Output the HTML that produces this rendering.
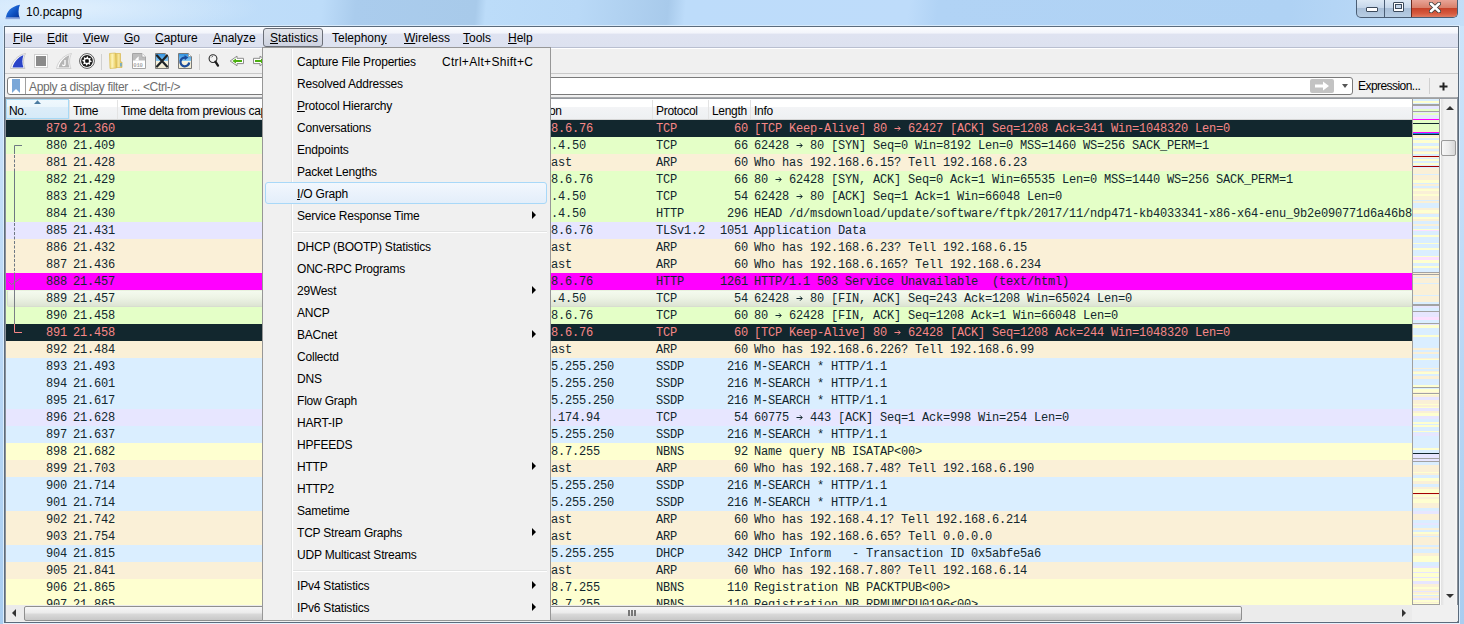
<!DOCTYPE html>
<html><head><meta charset="utf-8">
<style>
*{margin:0;padding:0;box-sizing:border-box}
html,body{width:1464px;height:624px;overflow:hidden}
body{position:relative;background:linear-gradient(#cde5fb 0%,#bcd9f6 50%,#a9cdf0 100%);font-family:"Liberation Sans",sans-serif;font-size:12px;color:#000}
.abs{position:absolute}
#title{left:26px;top:5px;font-size:12px;color:#000;}
#win{left:4px;top:26px;width:1455px;height:597px;border:1px solid #5b6b7c;background:#f0f0f0}
#menubar{left:5px;top:27px;width:1453px;height:21px;background:linear-gradient(#fbfcfe 0%,#f3f5fb 30%,#dfe3f1 36%,#dde2f0 100%);border-bottom:1px solid #b9bfd0}
.mb{position:absolute;top:4px;font-size:12px}
#toolbar{left:5px;top:48px;width:1453px;height:26px;background:#f0f0f0;border-top:1px solid #fff;border-bottom:1px solid #c9c9c9}
#filterbar{left:5px;top:74px;width:1453px;height:24px;background:#f0f0f0}
#fbox{left:7px;top:77px;width:1346px;height:18px;border:1px solid #7a7a7a;border-radius:3px;background:#fff}
#plist{left:5px;top:97px;width:1453px;height:525px;background:#f0f0f0}
#pframe{left:5px;top:97px;width:1453px;height:2px;background:linear-gradient(#b4b4b4,#8a9098)}
#pleft{left:5px;top:97px;width:1px;height:525px;background:#8a9098}
#hdr{left:6px;top:99px;width:1406px;height:21px;background:linear-gradient(#fff 0%,#fff 38%,#f3f4f6 38%,#eef0f2 100%);border-bottom:1px solid #d5d5d5}
.hc{position:absolute;top:5px;font-size:12px;letter-spacing:-0.3px}
.hs{position:absolute;top:1px;width:1px;height:19px;background:#e3e3e3}
#rows{left:6px;top:0;width:1406px;height:605px;overflow:hidden;clip-path:inset(120px 0 0 0)}
.r{position:absolute;left:0;width:1406px;height:17px;font-family:"Liberation Mono",monospace;font-size:12px;letter-spacing:-0.2px;color:#12272e;white-space:pre}
.r .c{position:absolute;top:2px}
.r .rt{text-align:right}
.ar{position:absolute;top:4px;z-index:1}
.bad{background:#12272e;color:#f78787}
.http{background:#e4ffc7}
.arp{background:#faf0d7}
.tcp{background:#e7e6ff}
.udp{background:#daeeff}
.smb{background:#feffd0}
.mag{background:#ff00ff}
.hover{background:#e4ffc7}
.hover:before{content:"";position:absolute;left:1px;top:0;right:-4px;bottom:0;border-radius:2px;background:linear-gradient(#f4faee 0%,#edf4e5 45%,#e3eada 80%,#dde4d3 100%);border:1px solid #d8ddd0;border-top-color:#e8f2de}
.r span{z-index:1}
#mini{left:1412px;top:98px;width:28px;height:507px;border:1px solid #a0a0a0;background:#daeeff;overflow:hidden}
#mini div{position:absolute;left:0;width:26px}
#vsb{left:1440px;top:99px;width:17px;height:506px;background:linear-gradient(90deg,#fafafa 0px,#fafafa 1px,#e2e2e2 1px,#e8e8e8 3px,#f0f0f0 4px,#f0f0f0 15px,#f6f6f6 16px)}
#pright{left:1457px;top:97px;width:1px;height:525px;background:#8a9098}
#hsb{left:6px;top:605px;width:1406px;height:16px;background:#ebebeb}
#corner{left:1412px;top:605px;width:46px;height:16px;background:#f0f0f0}
#menu{left:262px;top:47px;width:289px;height:574px;background:#f0f0f0;border:1px solid #979797}
#msepv{left:291px;top:49px;width:2px;height:569px;border-left:1px solid #e2e3e3;border-right:1px solid #fff}
.mi{position:absolute;left:265px;width:282px;height:22px}
.mi.hl{border:1px solid #a8d8f8;border-radius:3px;background:linear-gradient(#f2f7fd,#e3eefa)}
.ml{position:absolute;left:32px;top:5px;font-size:12px;letter-spacing:-0.2px}
.hl .ml{left:31px;top:4px}
.ms{position:absolute;left:177px;top:5px;font-size:12px;letter-spacing:0.3px}
.ma{position:absolute;left:267px;top:7px;width:0;height:0;border-top:4px solid transparent;border-bottom:4px solid transparent;border-left:4px solid #000}
.msep{position:absolute;left:293px;width:254px;height:2px;border-top:1px solid #e2e3e3;border-bottom:1px solid #fff}
u{text-decoration:underline}
</style></head><body>
<!-- title bar -->
<div class="abs" style="left:0;top:0;width:1464px;height:26px;background:radial-gradient(ellipse 200px 30px at 60px 8px,rgba(232,244,255,0.8),rgba(232,244,255,0) 100%),linear-gradient(95deg,#c4e0fa 0%,#bddcf9 22%,#aacced 24.3%,#a8caea 32.5%,#bcdcf9 33.2%,#b9d9f7 39.5%,#a8caeb 45.6%,#bddcfa 46.8%,#bedcfa 62%,#b1d3f5 64%,#afd2f4 88%,#c3def8 100%)"></div>
<svg class="abs" style="left:5px;top:4px" width="16" height="16" viewBox="0 0 16 16"><defs><linearGradient id="shk" x1="0" y1="0" x2="1" y2="1"><stop offset="0" stop-color="#3a8af0"/><stop offset="0.6" stop-color="#0d4fc0"/><stop offset="1" stop-color="#062f90"/></linearGradient></defs><path d="M0.8 14.5 C1.5 7.5 6 2.5 15 0.8 C13.2 4.5 13 10 14.8 14.5 Z" fill="url(#shk)"/><rect x="0.5" y="13.2" width="14.5" height="2" fill="#8ea6dc" opacity="0.9"/></svg>
<div id="title" class="abs">10.pcapng</div>
<div class="abs" style="left:1356px;top:0;width:102px;height:18px;border:1px solid #4a5d74;border-top:none;border-radius:0 0 5px 5px;overflow:hidden;background:linear-gradient(#dce8f4 0%,#c6d7ea 45%,#a9bfd8 50%,#b7cde3 100%)">
 <div class="abs" style="left:27px;top:0;width:1px;height:17px;background:#4a5d74"></div>
 <div class="abs" style="left:54px;top:0;width:47px;height:17px;background:linear-gradient(#e8a496 0%,#d9806b 45%,#c7432a 50%,#d65a3f 80%,#e07c62 100%);border-left:1px solid #6b2a1e"></div>
 <div class="abs" style="left:9px;top:7px;width:12px;height:5px;background:#fff;border:1px solid #3b4a5c;border-radius:1px"></div>
 <div class="abs" style="left:36px;top:2px;width:11px;height:10px;border:1px solid #3b4a5c;border-radius:1px;background:#fff"></div>
 <div class="abs" style="left:38px;top:4px;width:7px;height:5px;border:1px solid #3b4a5c;background:#c6d7ea"></div>
 <svg class="abs" style="left:72px;top:2px" width="12" height="11" viewBox="0 0 12 11"><path d="M2 1.8 L10 9.2 M10 1.8 L2 9.2" stroke="#3b3b3b" stroke-width="4.2" stroke-linecap="round"/><path d="M2 1.8 L10 9.2 M10 1.8 L2 9.2" stroke="#fff" stroke-width="2.6" stroke-linecap="round"/></svg>
</div>
<div class="abs" style="left:3px;top:25px;width:1457px;height:1px;background:#d8ebfc"></div><div class="abs" style="left:3px;top:25px;width:1px;height:599px;background:#dcedfc"></div><div class="abs" style="left:1459px;top:26px;width:1px;height:598px;background:#dcedfc"></div><div class="abs" style="left:3px;top:623px;width:1457px;height:1px;background:#e6f2fd"></div>
<div id="win" class="abs"></div>
<div id="menubar" class="abs">
 <span class="mb" style="left:8px"><u>F</u>ile</span>
 <span class="mb" style="left:42px"><u>E</u>dit</span>
 <span class="mb" style="left:78px"><u>V</u>iew</span>
 <span class="mb" style="left:119px"><u>G</u>o</span>
 <span class="mb" style="left:150px"><u>C</u>apture</span>
 <span class="mb" style="left:208px"><u>A</u>nalyze</span>
 <div class="abs" style="left:258px;top:1px;width:60px;height:19px;border:1px solid #6b6f78;border-radius:3px;background:linear-gradient(#e4e6ec,#cdd2e0)"></div>
 <span class="mb" style="left:265px"><u>S</u>tatistics</span>
 <span class="mb" style="left:327px">Telephon<u>y</u></span>
 <span class="mb" style="left:399px"><u>W</u>ireless</span>
 <span class="mb" style="left:458px"><u>T</u>ools</span>
 <span class="mb" style="left:503px"><u>H</u>elp</span>
</div>
<div id="toolbar" class="abs"></div>
<!-- toolbar icons -->
<svg width="0" height="0" style="position:absolute"><defs>
<linearGradient id="sky" x1="0" y1="0" x2="0" y2="1"><stop offset="0" stop-color="#2a8fe0"/><stop offset="0.5" stop-color="#8ccaf4"/><stop offset="0.52" stop-color="#f6f3e0"/><stop offset="1" stop-color="#efe9cf"/></linearGradient>
<linearGradient id="fold1" x1="0" y1="0" x2="1" y2="0"><stop offset="0" stop-color="#f0d870"/><stop offset="0.4" stop-color="#fdf3b8"/><stop offset="1" stop-color="#e6c550"/></linearGradient>
<linearGradient id="fold2" x1="0" y1="0" x2="1" y2="0"><stop offset="0" stop-color="#d9b948"/><stop offset="0.5" stop-color="#f6e49a"/><stop offset="1" stop-color="#e2c456"/></linearGradient>
</defs></svg>

<svg class="abs" style="left:10px;top:53px" width="16" height="16" viewBox="0 0 16 16"><path d="M0.5 15.5 C2 8 8 2 15.5 0.5 C13 5 13 11 15 15.5 Z" fill="#fff" stroke="#c8c8c8" stroke-width="1"/><path d="M2.5 14.5 C4 9 8 4 13.5 2 C12 6 12 11 13.5 14.5 Z" fill="#2a44c8"/></svg>
<div class="abs" style="left:34px;top:54px;width:14px;height:14px;border:1px solid #d0d0d0;background:#fff"></div>
<div class="abs" style="left:36px;top:56px;width:10px;height:10px;background:#8a8a8a"></div>
<svg class="abs" style="left:56px;top:53px" width="16" height="16" viewBox="0 0 16 16"><path d="M0.5 15.5 C2 8 8 2 15.5 0.5 C13 5 13 11 15 15.5 Z" fill="#fff" stroke="#d0d0d0" stroke-width="1"/><path d="M2.5 14.5 C4 9 8 4 13.5 2 C12 6 12 11 13.5 14.5 Z" fill="#b5b5b5"/><path d="M9 7 L9 11.5 C9 13 6.5 13 6.5 11.5" fill="none" stroke="#fff" stroke-width="1.3"/></svg>
<svg class="abs" style="left:79px;top:53px" width="16" height="16" viewBox="0 0 16 16"><circle cx="8" cy="8" r="7.4" fill="#fff" stroke="#5a5a5a" stroke-width="1"/><circle cx="8" cy="8" r="5.9" fill="#1a1a1a"/><path d="M8.00 3.40 L8.90 3.49 L9.26 4.95 L9.83 5.26 L11.25 4.75 L11.82 5.44 L11.05 6.74 L11.24 7.36 L12.60 8.00 L12.51 8.90 L11.05 9.26 L10.74 9.83 L11.25 11.25 L10.56 11.82 L9.26 11.05 L8.64 11.24 L8.00 12.60 L7.10 12.51 L6.74 11.05 L6.17 10.74 L4.75 11.25 L4.18 10.56 L4.95 9.26 L4.76 8.64 L3.40 8.00 L3.49 7.10 L4.95 6.74 L5.26 6.17 L4.75 4.75 L5.44 4.18 L6.74 4.95 L7.36 4.76 Z" fill="#fff"/><rect x="6.2" y="6.2" width="3.6" height="3.6" rx="0.8" fill="#111"/></svg>
<div class="abs" style="left:101px;top:54px;width:1px;height:16px;background:#d0d0d0"></div>
<svg class="abs" style="left:108px;top:52px" width="16" height="17" viewBox="0 0 16 17"><path d="M7 1.5 L12.5 1.5 L12.5 10 L14 10 L14 15.5 L8 15.5 Z" fill="url(#fold2)" stroke="#d8b850" stroke-width="0.7"/><path d="M1.5 1.5 L7.5 1 L8.5 16 L2 16.5 Z" fill="url(#fold1)" stroke="#d8bc58" stroke-width="0.7"/><rect x="12.3" y="11" width="1.3" height="3.5" fill="#4aa0e8"/></svg>
<svg class="abs" style="left:131px;top:53px" width="16" height="16" viewBox="0 0 16 16"><path d="M1.5 0.5 L11 0.5 L14.5 4 L14.5 15.5 L1.5 15.5 Z" fill="#fff" stroke="#a6a6a6"/><path d="M2 1 L10.8 1 L14 4.2 L14 7.5 L2 7.5 Z" fill="#bdbdbd"/><path d="M11 0.5 L11 4 L14.5 4" fill="#fff" stroke="#a6a6a6" stroke-width="0.8"/><path d="M4 7.5 C5 5.5 6.5 4 8 3.5 C7.5 5 7.5 6.5 8 7.5 Z" fill="#fff"/><text x="2.3" y="13.6" font-family="Liberation Mono" font-size="5.6" fill="#a8a8a8" font-weight="bold" letter-spacing="-0.2">010</text></svg>
<svg class="abs" style="left:154px;top:53px" width="16" height="16" viewBox="0 0 16 16"><path d="M1.5 0.5 L11.5 0.5 L14.5 3.5 L14.5 15.5 L1.5 15.5 Z" fill="url(#sky)" stroke="#7a7a78"/><path d="M11.5 0.5 L11.5 3.5 L14.5 3.5" fill="#fff" stroke="#9a9a98" stroke-width="0.8"/><path d="M3 2.5 L13 13.5 M13 2.5 L3 13.5" stroke="#1e2326" stroke-width="2.2" stroke-linecap="round"/></svg>
<svg class="abs" style="left:177px;top:53px" width="16" height="16" viewBox="0 0 16 16"><path d="M1.5 0.5 L11.5 0.5 L14.5 3.5 L14.5 15.5 L1.5 15.5 Z" fill="url(#sky)" stroke="#7a7a78"/><path d="M11.5 0.5 L11.5 3.5 L14.5 3.5" fill="#fff" stroke="#9a9a98" stroke-width="0.8"/><path d="M12.2 9.5 A4.4 4.4 0 1 1 8.5 4.6" fill="none" stroke="#1b4c9c" stroke-width="2.3"/><path d="M7.5 2 L11.3 4.6 L7.8 7.2 Z" fill="#1b4c9c"/></svg>
<div class="abs" style="left:199px;top:54px;width:1px;height:16px;background:#d0d0d0"></div>
<svg class="abs" style="left:207px;top:53px" width="16" height="16" viewBox="0 0 16 16"><circle cx="6" cy="5.6" r="3.9" fill="#f4f4f4" stroke="#2a2a2a" stroke-width="1.1"/><path d="M4.2 4.5 A2.2 2.2 0 0 1 6 3.3" fill="none" stroke="#555" stroke-width="0.8"/><path d="M8.4 8.6 L11 12.6" stroke="#1e1e1e" stroke-width="2.3" stroke-linecap="round"/></svg>
<svg class="abs" style="left:229px;top:53px" width="16" height="16" viewBox="0 0 16 16"><path d="M1.2 8 L8 3.1 L8 5.3 L14.5 5.3 L14.5 10.6 L8 10.6 L8 12.8 Z" fill="#fff" stroke="#8c8c8c" stroke-width="1" stroke-linejoin="round"/><path d="M3.3 8 L7 5.5 L7 7 L13 7 L13 9 L7 9 L7 10.5 Z" fill="#4caf10"/></svg>
<svg class="abs" style="left:252px;top:53px" width="16" height="16" viewBox="0 0 16 16"><path d="M14.8 8 L8 3.1 L8 5.3 L1.5 5.3 L1.5 10.6 L8 10.6 L8 12.8 Z" fill="#fff" stroke="#8c8c8c" stroke-width="1" stroke-linejoin="round"/><path d="M12.7 8 L9 5.5 L9 7 L3 7 L3 9 L9 9 L9 10.5 Z" fill="#4caf10"/></svg>
<div id="filterbar" class="abs"></div>
<div id="fbox" class="abs"></div>
<div class="abs" style="left:25px;top:78px;width:1px;height:16px;background:#a0a0a0"></div>
<svg class="abs" style="left:11px;top:79px" width="10" height="14" viewBox="0 0 10 14"><path d="M1 0 L9 0 L9 14 L5 10 L1 14 Z" fill="#7aa7d8"/></svg>
<div class="abs" style="left:29px;top:80px;color:#6d6d6d;font-size:12px;letter-spacing:-0.35px">Apply a display filter ... &lt;Ctrl-/&gt;</div>
<div class="abs" style="left:1310px;top:79px;width:24px;height:14px;background:#c3c3c3;border-radius:2px"></div>
<svg class="abs" style="left:1313px;top:80px" width="18" height="12" viewBox="0 0 18 12"><path d="M2 4.5 L10 4.5 L10 1.5 L16 6 L10 10.5 L10 7.5 L2 7.5 Z" fill="#fff"/></svg>
<div class="abs" style="left:1342px;top:84px;width:0;height:0;border-left:3.5px solid transparent;border-right:3.5px solid transparent;border-top:4px solid #555"></div>
<div class="abs" style="left:1358px;top:79px;font-size:12px;letter-spacing:-0.55px">Expression...</div>
<div class="abs" style="left:1429px;top:78px;width:1px;height:16px;background:#d0d0d0"></div>
<svg class="abs" style="left:1439px;top:82px" width="9" height="9" viewBox="0 0 9 9"><path d="M4.5 0.5 V8.5 M0.5 4.5 H8.5" stroke="#222" stroke-width="2"/></svg>
<!-- packet list -->
<div id="pframe" class="abs"></div><div id="pleft" class="abs"></div><div id="pright" class="abs"></div>
<div id="hdr" class="abs">
 <div class="abs" style="left:0;top:0;width:63px;height:20px;background:linear-gradient(#eff8fd 0%,#eaf5fc 38%,#dcedf9 38%,#d6eaf8 100%);border:1px solid #a7d9f5"></div>
 <svg class="abs" style="left:28px;top:1px" width="7" height="4" viewBox="0 0 7 4"><path d="M0 4 L3.5 0.3 L7 4 Z" fill="#4a7aa0"/></svg>
 <span class="hc" style="left:3px">No.</span>
 <div class="hs" style="left:63px"></div>
 <span class="hc" style="left:67px">Time</span>
 <div class="hs" style="left:111px"></div>
 <span class="hc" style="left:115px">Time delta from previous captured frame</span>
 <div class="hs" style="left:646px"></div>
 <span class="hc" style="left:499px">Destination</span>
 <span class="hc" style="left:650px">Protocol</span>
 <div class="hs" style="left:702px"></div>
 <span class="hc" style="left:706px">Length</span>
 <div class="hs" style="left:744px"></div>
 <span class="hc" style="left:748px">Info</span>
</div>
<div id="rows" class="abs">
<div class="r bad" style="top:120px"><span class="c" style="left:40px">879</span><span class="c" style="left:67px">21.360</span><span class="c" style="left:503px">192.168.6.76</span><span class="c" style="left:650px">TCP</span><span class="c rt" style="right:664px">60</span><span class="c" style="left:748px">[TCP Keep-Alive] 80   62427 [ACK] Seq=1208 Ack=341 Win=1048320 Len=0</span><svg class="ar" style="left:888px" width="7" height="9" viewBox="0 0 7 9"><path d="M0.5 4.5 H6 M4 2.3 L6.2 4.5 L4 6.7" fill="none" stroke="currentColor" stroke-width="1"/></svg></div>
<div class="r http" style="top:137px"><span class="c" style="left:40px">880</span><span class="c" style="left:67px">21.409</span><span class="c" style="left:503px">13.107.4.50</span><span class="c" style="left:650px">TCP</span><span class="c rt" style="right:664px">66</span><span class="c" style="left:748px">62428   80 [SYN] Seq=0 Win=8192 Len=0 MSS=1460 WS=256 SACK_PERM=1</span><svg class="ar" style="left:790px" width="7" height="9" viewBox="0 0 7 9"><path d="M0.5 4.5 H6 M4 2.3 L6.2 4.5 L4 6.7" fill="none" stroke="currentColor" stroke-width="1"/></svg></div>
<div class="r arp" style="top:154px"><span class="c" style="left:40px">881</span><span class="c" style="left:67px">21.428</span><span class="c" style="left:503px">Broadcast</span><span class="c" style="left:650px">ARP</span><span class="c rt" style="right:664px">60</span><span class="c" style="left:748px">Who has 192.168.6.15? Tell 192.168.6.23</span></div>
<div class="r http" style="top:171px"><span class="c" style="left:40px">882</span><span class="c" style="left:67px">21.429</span><span class="c" style="left:503px">192.168.6.76</span><span class="c" style="left:650px">TCP</span><span class="c rt" style="right:664px">66</span><span class="c" style="left:748px">80   62428 [SYN, ACK] Seq=0 Ack=1 Win=65535 Len=0 MSS=1440 WS=256 SACK_PERM=1</span><svg class="ar" style="left:769px" width="7" height="9" viewBox="0 0 7 9"><path d="M0.5 4.5 H6 M4 2.3 L6.2 4.5 L4 6.7" fill="none" stroke="currentColor" stroke-width="1"/></svg></div>
<div class="r http" style="top:188px"><span class="c" style="left:40px">883</span><span class="c" style="left:67px">21.429</span><span class="c" style="left:503px">13.107.4.50</span><span class="c" style="left:650px">TCP</span><span class="c rt" style="right:664px">54</span><span class="c" style="left:748px">62428   80 [ACK] Seq=1 Ack=1 Win=66048 Len=0</span><svg class="ar" style="left:790px" width="7" height="9" viewBox="0 0 7 9"><path d="M0.5 4.5 H6 M4 2.3 L6.2 4.5 L4 6.7" fill="none" stroke="currentColor" stroke-width="1"/></svg></div>
<div class="r http" style="top:205px"><span class="c" style="left:40px">884</span><span class="c" style="left:67px">21.430</span><span class="c" style="left:503px">13.107.4.50</span><span class="c" style="left:650px">HTTP</span><span class="c rt" style="right:664px">296</span><span class="c" style="left:748px">HEAD /d/msdownload/update/software/ftpk/2017/11/ndp471-kb4033341-x86-x64-enu_9b2e090771d6a46b80b5</span></div>
<div class="r tcp" style="top:222px"><span class="c" style="left:40px">885</span><span class="c" style="left:67px">21.431</span><span class="c" style="left:503px">192.168.6.76</span><span class="c" style="left:650px">TLSv1.2</span><span class="c rt" style="right:664px">1051</span><span class="c" style="left:748px">Application Data</span></div>
<div class="r arp" style="top:239px"><span class="c" style="left:40px">886</span><span class="c" style="left:67px">21.432</span><span class="c" style="left:503px">Broadcast</span><span class="c" style="left:650px">ARP</span><span class="c rt" style="right:664px">60</span><span class="c" style="left:748px">Who has 192.168.6.23? Tell 192.168.6.15</span></div>
<div class="r arp" style="top:256px"><span class="c" style="left:40px">887</span><span class="c" style="left:67px">21.436</span><span class="c" style="left:503px">Broadcast</span><span class="c" style="left:650px">ARP</span><span class="c rt" style="right:664px">60</span><span class="c" style="left:748px">Who has 192.168.6.165? Tell 192.168.6.234</span></div>
<div class="r mag" style="top:273px"><span class="c" style="left:40px">888</span><span class="c" style="left:67px">21.457</span><span class="c" style="left:503px">192.168.6.76</span><span class="c" style="left:650px">HTTP</span><span class="c rt" style="right:664px">1261</span><span class="c" style="left:748px">HTTP/1.1 503 Service Unavailable  (text/html)</span></div>
<div class="r hover" style="top:290px"><span class="c" style="left:40px">889</span><span class="c" style="left:67px">21.457</span><span class="c" style="left:503px">13.107.4.50</span><span class="c" style="left:650px">TCP</span><span class="c rt" style="right:664px">54</span><span class="c" style="left:748px">62428   80 [FIN, ACK] Seq=243 Ack=1208 Win=65024 Len=0</span><svg class="ar" style="left:790px" width="7" height="9" viewBox="0 0 7 9"><path d="M0.5 4.5 H6 M4 2.3 L6.2 4.5 L4 6.7" fill="none" stroke="currentColor" stroke-width="1"/></svg></div>
<div class="r http" style="top:307px"><span class="c" style="left:40px">890</span><span class="c" style="left:67px">21.458</span><span class="c" style="left:503px">192.168.6.76</span><span class="c" style="left:650px">TCP</span><span class="c rt" style="right:664px">60</span><span class="c" style="left:748px">80   62428 [FIN, ACK] Seq=1208 Ack=1 Win=66048 Len=0</span><svg class="ar" style="left:769px" width="7" height="9" viewBox="0 0 7 9"><path d="M0.5 4.5 H6 M4 2.3 L6.2 4.5 L4 6.7" fill="none" stroke="currentColor" stroke-width="1"/></svg></div>
<div class="r bad" style="top:324px"><span class="c" style="left:40px">891</span><span class="c" style="left:67px">21.458</span><span class="c" style="left:503px">192.168.6.76</span><span class="c" style="left:650px">TCP</span><span class="c rt" style="right:664px">60</span><span class="c" style="left:748px">[TCP Keep-Alive] 80   62428 [ACK] Seq=1208 Ack=244 Win=1048320 Len=0</span><svg class="ar" style="left:888px" width="7" height="9" viewBox="0 0 7 9"><path d="M0.5 4.5 H6 M4 2.3 L6.2 4.5 L4 6.7" fill="none" stroke="currentColor" stroke-width="1"/></svg></div>
<div class="r arp" style="top:341px"><span class="c" style="left:40px">892</span><span class="c" style="left:67px">21.484</span><span class="c" style="left:503px">Broadcast</span><span class="c" style="left:650px">ARP</span><span class="c rt" style="right:664px">60</span><span class="c" style="left:748px">Who has 192.168.6.226? Tell 192.168.6.99</span></div>
<div class="r udp" style="top:358px"><span class="c" style="left:40px">893</span><span class="c" style="left:67px">21.493</span><span class="c" style="left:503px">239.255.255.250</span><span class="c" style="left:650px">SSDP</span><span class="c rt" style="right:664px">216</span><span class="c" style="left:748px">M-SEARCH * HTTP/1.1</span></div>
<div class="r udp" style="top:375px"><span class="c" style="left:40px">894</span><span class="c" style="left:67px">21.601</span><span class="c" style="left:503px">239.255.255.250</span><span class="c" style="left:650px">SSDP</span><span class="c rt" style="right:664px">216</span><span class="c" style="left:748px">M-SEARCH * HTTP/1.1</span></div>
<div class="r udp" style="top:392px"><span class="c" style="left:40px">895</span><span class="c" style="left:67px">21.617</span><span class="c" style="left:503px">239.255.255.250</span><span class="c" style="left:650px">SSDP</span><span class="c rt" style="right:664px">216</span><span class="c" style="left:748px">M-SEARCH * HTTP/1.1</span></div>
<div class="r tcp" style="top:409px"><span class="c" style="left:40px">896</span><span class="c" style="left:67px">21.628</span><span class="c" style="left:503px">52.114.174.94</span><span class="c" style="left:650px">TCP</span><span class="c rt" style="right:664px">54</span><span class="c" style="left:748px">60775   443 [ACK] Seq=1 Ack=998 Win=254 Len=0</span><svg class="ar" style="left:790px" width="7" height="9" viewBox="0 0 7 9"><path d="M0.5 4.5 H6 M4 2.3 L6.2 4.5 L4 6.7" fill="none" stroke="currentColor" stroke-width="1"/></svg></div>
<div class="r udp" style="top:426px"><span class="c" style="left:40px">897</span><span class="c" style="left:67px">21.637</span><span class="c" style="left:503px">239.255.255.250</span><span class="c" style="left:650px">SSDP</span><span class="c rt" style="right:664px">216</span><span class="c" style="left:748px">M-SEARCH * HTTP/1.1</span></div>
<div class="r smb" style="top:443px"><span class="c" style="left:40px">898</span><span class="c" style="left:67px">21.682</span><span class="c" style="left:503px">192.168.7.255</span><span class="c" style="left:650px">NBNS</span><span class="c rt" style="right:664px">92</span><span class="c" style="left:748px">Name query NB ISATAP&lt;00&gt;</span></div>
<div class="r arp" style="top:460px"><span class="c" style="left:40px">899</span><span class="c" style="left:67px">21.703</span><span class="c" style="left:503px">Broadcast</span><span class="c" style="left:650px">ARP</span><span class="c rt" style="right:664px">60</span><span class="c" style="left:748px">Who has 192.168.7.48? Tell 192.168.6.190</span></div>
<div class="r udp" style="top:477px"><span class="c" style="left:40px">900</span><span class="c" style="left:67px">21.714</span><span class="c" style="left:503px">239.255.255.250</span><span class="c" style="left:650px">SSDP</span><span class="c rt" style="right:664px">216</span><span class="c" style="left:748px">M-SEARCH * HTTP/1.1</span></div>
<div class="r udp" style="top:494px"><span class="c" style="left:40px">901</span><span class="c" style="left:67px">21.714</span><span class="c" style="left:503px">239.255.255.250</span><span class="c" style="left:650px">SSDP</span><span class="c rt" style="right:664px">216</span><span class="c" style="left:748px">M-SEARCH * HTTP/1.1</span></div>
<div class="r arp" style="top:511px"><span class="c" style="left:40px">902</span><span class="c" style="left:67px">21.742</span><span class="c" style="left:503px">Broadcast</span><span class="c" style="left:650px">ARP</span><span class="c rt" style="right:664px">60</span><span class="c" style="left:748px">Who has 192.168.4.1? Tell 192.168.6.214</span></div>
<div class="r arp" style="top:528px"><span class="c" style="left:40px">903</span><span class="c" style="left:67px">21.754</span><span class="c" style="left:503px">Broadcast</span><span class="c" style="left:650px">ARP</span><span class="c rt" style="right:664px">60</span><span class="c" style="left:748px">Who has 192.168.6.65? Tell 0.0.0.0</span></div>
<div class="r udp" style="top:545px"><span class="c" style="left:40px">904</span><span class="c" style="left:67px">21.815</span><span class="c" style="left:503px">255.255.255.255</span><span class="c" style="left:650px">DHCP</span><span class="c rt" style="right:664px">342</span><span class="c" style="left:748px">DHCP Inform   - Transaction ID 0x5abfe5a6</span></div>
<div class="r arp" style="top:562px"><span class="c" style="left:40px">905</span><span class="c" style="left:67px">21.841</span><span class="c" style="left:503px">Broadcast</span><span class="c" style="left:650px">ARP</span><span class="c rt" style="right:664px">60</span><span class="c" style="left:748px">Who has 192.168.7.80? Tell 192.168.6.14</span></div>
<div class="r smb" style="top:579px"><span class="c" style="left:40px">906</span><span class="c" style="left:67px">21.865</span><span class="c" style="left:503px">192.168.7.255</span><span class="c" style="left:650px">NBNS</span><span class="c rt" style="right:664px">110</span><span class="c" style="left:748px">Registration NB PACKTPUB&lt;00&gt;</span></div>
<div class="r smb" style="top:596px"><span class="c" style="left:40px">907</span><span class="c" style="left:67px">21.865</span><span class="c" style="left:503px">192.168.7.255</span><span class="c" style="left:650px">NBNS</span><span class="c rt" style="right:664px">110</span><span class="c" style="left:748px">Registration NB RPMUMCPU0196&lt;00&gt;</span></div>
</div>
<!-- tree line -->
<svg class="abs" style="left:0;top:0" width="30" height="345" viewBox="0 0 30 345">
<path d="M22 145.5 H14.5 V154" fill="none" stroke="#6e7883" stroke-width="1"/>
<path d="M14.5 154 V171" fill="none" stroke="#6e7883" stroke-width="1" stroke-dasharray="3 1.5" stroke-dashoffset="-1"/>
<path d="M14.5 171 V222" fill="none" stroke="#6e7883" stroke-width="1"/>
<path d="M14.5 222 V273" fill="none" stroke="#6e7883" stroke-width="1" stroke-dasharray="3 1.5" stroke-dashoffset="-1"/>
<path d="M14.5 273 V324" fill="none" stroke="#7a7f86" stroke-width="1"/>
<path d="M14.5 324 V332.5 H22" fill="none" stroke="#f78787" stroke-width="1"/>
<path d="M8.5 281.5 L11.5 284.5 L20.5 278.5" fill="none" stroke="#8a7a8a" stroke-width="1"/>
</svg>
<div id="mini" class="abs"><div style="top:0px;height:2px;background:#daeeff"></div><div style="top:2px;height:2px;background:#feffd0"></div><div style="top:4px;height:2px;background:#daeeff"></div><div style="top:6px;height:1px;background:#e4ffc7"></div><div style="top:7px;height:3px;background:#e7e6ff"></div><div style="top:10px;height:3px;background:#e4ffc7"></div><div style="top:13px;height:1px;background:#e7e6ff"></div><div style="top:14px;height:2px;background:#e4ffc7"></div><div style="top:16px;height:1px;background:#e7e6ff"></div><div style="top:17px;height:3px;background:#e7e6ff"></div><div style="top:20px;height:2px;background:#e4ffc7"></div><div style="top:22px;height:3px;background:#e4ffc7"></div><div style="top:25px;height:3px;background:#e4ffc7"></div><div style="top:28px;height:1px;background:#e4ffc7"></div><div style="top:29px;height:1px;background:#e4ffc7"></div><div style="top:30px;height:3px;background:#e4ffc7"></div><div style="top:33px;height:2px;background:#e4ffc7"></div><div style="top:35px;height:2px;background:#faf0d7"></div><div style="top:37px;height:1px;background:#faf0d7"></div><div style="top:38px;height:1px;background:#feffd0"></div><div style="top:39px;height:2px;background:#daeeff"></div><div style="top:41px;height:1px;background:#feffd0"></div><div style="top:42px;height:2px;background:#feffd0"></div><div style="top:44px;height:3px;background:#daeeff"></div><div style="top:47px;height:2px;background:#feffd0"></div><div style="top:49px;height:1px;background:#faf0d7"></div><div style="top:50px;height:2px;background:#daeeff"></div><div style="top:52px;height:1px;background:#faf0d7"></div><div style="top:53px;height:1px;background:#feffd0"></div><div style="top:54px;height:1px;background:#feffd0"></div><div style="top:55px;height:2px;background:#daeeff"></div><div style="top:57px;height:1px;background:#daeeff"></div><div style="top:58px;height:1px;background:#faf0d7"></div><div style="top:59px;height:1px;background:#daeeff"></div><div style="top:60px;height:2px;background:#feffd0"></div><div style="top:62px;height:2px;background:#daeeff"></div><div style="top:64px;height:1px;background:#feffd0"></div><div style="top:65px;height:1px;background:#feffd0"></div><div style="top:66px;height:2px;background:#daeeff"></div><div style="top:68px;height:1px;background:#daeeff"></div><div style="top:69px;height:2px;background:#faf0d7"></div><div style="top:71px;height:2px;background:#faf0d7"></div><div style="top:73px;height:1px;background:#faf0d7"></div><div style="top:74px;height:1px;background:#faf0d7"></div><div style="top:75px;height:1px;background:#daeeff"></div><div style="top:76px;height:2px;background:#faf0d7"></div><div style="top:78px;height:3px;background:#faf0d7"></div><div style="top:81px;height:2px;background:#feffd0"></div><div style="top:83px;height:1px;background:#feffd0"></div><div style="top:84px;height:1px;background:#daeeff"></div><div style="top:85px;height:2px;background:#faf0d7"></div><div style="top:87px;height:2px;background:#daeeff"></div><div style="top:89px;height:1px;background:#faf0d7"></div><div style="top:90px;height:2px;background:#feffd0"></div><div style="top:92px;height:2px;background:#faf0d7"></div><div style="top:94px;height:1px;background:#faf0d7"></div><div style="top:95px;height:2px;background:#feffd0"></div><div style="top:97px;height:3px;background:#faf0d7"></div><div style="top:100px;height:1px;background:#faf0d7"></div><div style="top:101px;height:1px;background:#daeeff"></div><div style="top:102px;height:2px;background:#faf0d7"></div><div style="top:104px;height:3px;background:#daeeff"></div><div style="top:107px;height:2px;background:#daeeff"></div><div style="top:109px;height:1px;background:#faf0d7"></div><div style="top:110px;height:1px;background:#faf0d7"></div><div style="top:111px;height:3px;background:#feffd0"></div><div style="top:114px;height:1px;background:#faf0d7"></div><div style="top:115px;height:3px;background:#daeeff"></div><div style="top:118px;height:2px;background:#feffd0"></div><div style="top:120px;height:2px;background:#faf0d7"></div><div style="top:122px;height:3px;background:#daeeff"></div><div style="top:125px;height:2px;background:#faf0d7"></div><div style="top:127px;height:2px;background:#daeeff"></div><div style="top:129px;height:1px;background:#daeeff"></div><div style="top:130px;height:1px;background:#feffd0"></div><div style="top:131px;height:1px;background:#fce0ff"></div><div style="top:132px;height:1px;background:#daeeff"></div><div style="top:133px;height:3px;background:#daeeff"></div><div style="top:136px;height:2px;background:#feffd0"></div><div style="top:138px;height:3px;background:#daeeff"></div><div style="top:141px;height:2px;background:#daeeff"></div><div style="top:143px;height:1px;background:#daeeff"></div><div style="top:144px;height:1px;background:#feffd0"></div><div style="top:145px;height:2px;background:#daeeff"></div><div style="top:147px;height:2px;background:#daeeff"></div><div style="top:149px;height:2px;background:#feffd0"></div><div style="top:151px;height:2px;background:#daeeff"></div><div style="top:153px;height:3px;background:#daeeff"></div><div style="top:156px;height:1px;background:#daeeff"></div><div style="top:157px;height:1px;background:#feffd0"></div><div style="top:158px;height:3px;background:#fce0ff"></div><div style="top:161px;height:3px;background:#feffd0"></div><div style="top:164px;height:1px;background:#daeeff"></div><div style="top:165px;height:1px;background:#daeeff"></div><div style="top:166px;height:1px;background:#daeeff"></div><div style="top:167px;height:2px;background:#feffd0"></div><div style="top:169px;height:2px;background:#daeeff"></div><div style="top:171px;height:1px;background:#daeeff"></div><div style="top:172px;height:1px;background:#daeeff"></div><div style="top:173px;height:1px;background:#feffd0"></div><div style="top:174px;height:3px;background:#faf0d7"></div><div style="top:177px;height:1px;background:#faf0d7"></div><div style="top:178px;height:1px;background:#daeeff"></div><div style="top:179px;height:2px;background:#faf0d7"></div><div style="top:181px;height:3px;background:#faf0d7"></div><div style="top:184px;height:1px;background:#daeeff"></div><div style="top:185px;height:2px;background:#faf0d7"></div><div style="top:187px;height:1px;background:#faf0d7"></div><div style="top:188px;height:3px;background:#faf0d7"></div><div style="top:191px;height:2px;background:#faf0d7"></div><div style="top:193px;height:2px;background:#faf0d7"></div><div style="top:195px;height:1px;background:#faf0d7"></div><div style="top:196px;height:1px;background:#daeeff"></div><div style="top:197px;height:3px;background:#faf0d7"></div><div style="top:200px;height:1px;background:#faf0d7"></div><div style="top:201px;height:2px;background:#faf0d7"></div><div style="top:203px;height:1px;background:#daeeff"></div><div style="top:204px;height:1px;background:#daeeff"></div><div style="top:205px;height:1px;background:#daeeff"></div><div style="top:206px;height:3px;background:#e7e6ff"></div><div style="top:209px;height:3px;background:#daeeff"></div><div style="top:212px;height:2px;background:#e7e6ff"></div><div style="top:214px;height:3px;background:#e7e6ff"></div><div style="top:217px;height:1px;background:#e7e6ff"></div><div style="top:218px;height:1px;background:#fce0ff"></div><div style="top:219px;height:2px;background:#fce0ff"></div><div style="top:221px;height:2px;background:#daeeff"></div><div style="top:223px;height:2px;background:#daeeff"></div><div style="top:225px;height:1px;background:#e7e6ff"></div><div style="top:226px;height:3px;background:#feffd0"></div><div style="top:229px;height:1px;background:#daeeff"></div><div style="top:230px;height:3px;background:#daeeff"></div><div style="top:233px;height:2px;background:#daeeff"></div><div style="top:235px;height:1px;background:#daeeff"></div><div style="top:236px;height:2px;background:#feffd0"></div><div style="top:238px;height:2px;background:#daeeff"></div><div style="top:240px;height:1px;background:#daeeff"></div><div style="top:241px;height:2px;background:#daeeff"></div><div style="top:243px;height:3px;background:#daeeff"></div><div style="top:246px;height:3px;background:#daeeff"></div><div style="top:249px;height:2px;background:#faf0d7"></div><div style="top:251px;height:2px;background:#daeeff"></div><div style="top:253px;height:2px;background:#faf0d7"></div><div style="top:255px;height:2px;background:#daeeff"></div><div style="top:257px;height:2px;background:#daeeff"></div><div style="top:259px;height:1px;background:#faf0d7"></div><div style="top:260px;height:1px;background:#feffd0"></div><div style="top:261px;height:2px;background:#daeeff"></div><div style="top:263px;height:1px;background:#daeeff"></div><div style="top:264px;height:2px;background:#daeeff"></div><div style="top:266px;height:1px;background:#daeeff"></div><div style="top:267px;height:2px;background:#daeeff"></div><div style="top:269px;height:1px;background:#faf0d7"></div><div style="top:270px;height:2px;background:#daeeff"></div><div style="top:272px;height:1px;background:#faf0d7"></div><div style="top:273px;height:2px;background:#feffd0"></div><div style="top:275px;height:2px;background:#daeeff"></div><div style="top:277px;height:3px;background:#faf0d7"></div><div style="top:280px;height:2px;background:#daeeff"></div><div style="top:282px;height:1px;background:#daeeff"></div><div style="top:283px;height:3px;background:#daeeff"></div><div style="top:286px;height:2px;background:#feffd0"></div><div style="top:288px;height:2px;background:#daeeff"></div><div style="top:290px;height:3px;background:#feffd0"></div><div style="top:293px;height:1px;background:#faf0d7"></div><div style="top:294px;height:2px;background:#feffd0"></div><div style="top:296px;height:1px;background:#faf0d7"></div><div style="top:297px;height:1px;background:#faf0d7"></div><div style="top:298px;height:1px;background:#e7e6ff"></div><div style="top:299px;height:2px;background:#e7e6ff"></div><div style="top:301px;height:3px;background:#faf0d7"></div><div style="top:304px;height:1px;background:#faf0d7"></div><div style="top:305px;height:1px;background:#feffd0"></div><div style="top:306px;height:2px;background:#faf0d7"></div><div style="top:308px;height:1px;background:#feffd0"></div><div style="top:309px;height:3px;background:#e7e6ff"></div><div style="top:312px;height:1px;background:#faf0d7"></div><div style="top:313px;height:1px;background:#faf0d7"></div><div style="top:314px;height:3px;background:#feffd0"></div><div style="top:317px;height:3px;background:#e7e6ff"></div><div style="top:320px;height:3px;background:#daeeff"></div><div style="top:323px;height:2px;background:#feffd0"></div><div style="top:325px;height:1px;background:#daeeff"></div><div style="top:326px;height:2px;background:#feffd0"></div><div style="top:328px;height:2px;background:#daeeff"></div><div style="top:330px;height:2px;background:#daeeff"></div><div style="top:332px;height:1px;background:#feffd0"></div><div style="top:333px;height:1px;background:#daeeff"></div><div style="top:334px;height:3px;background:#e7e6ff"></div><div style="top:337px;height:3px;background:#daeeff"></div><div style="top:340px;height:2px;background:#daeeff"></div><div style="top:342px;height:1px;background:#daeeff"></div><div style="top:343px;height:1px;background:#daeeff"></div><div style="top:344px;height:1px;background:#daeeff"></div><div style="top:345px;height:1px;background:#daeeff"></div><div style="top:346px;height:3px;background:#daeeff"></div><div style="top:349px;height:2px;background:#feffd0"></div><div style="top:351px;height:1px;background:#daeeff"></div><div style="top:352px;height:3px;background:#daeeff"></div><div style="top:355px;height:1px;background:#e7e6ff"></div><div style="top:356px;height:2px;background:#e7e6ff"></div><div style="top:358px;height:2px;background:#e7e6ff"></div><div style="top:360px;height:1px;background:#e7e6ff"></div><div style="top:361px;height:1px;background:#e7e6ff"></div><div style="top:362px;height:1px;background:#e7e6ff"></div><div style="top:363px;height:3px;background:#daeeff"></div><div style="top:366px;height:1px;background:#faf0d7"></div><div style="top:367px;height:1px;background:#faf0d7"></div><div style="top:368px;height:3px;background:#faf0d7"></div><div style="top:371px;height:2px;background:#faf0d7"></div><div style="top:373px;height:1px;background:#feffd0"></div><div style="top:374px;height:2px;background:#faf0d7"></div><div style="top:376px;height:3px;background:#daeeff"></div><div style="top:379px;height:3px;background:#feffd0"></div><div style="top:382px;height:3px;background:#faf0d7"></div><div style="top:385px;height:3px;background:#daeeff"></div><div style="top:388px;height:2px;background:#faf0d7"></div><div style="top:390px;height:3px;background:#feffd0"></div><div style="top:393px;height:2px;background:#feffd0"></div><div style="top:395px;height:1px;background:#faf0d7"></div><div style="top:396px;height:2px;background:#feffd0"></div><div style="top:398px;height:2px;background:#faf0d7"></div><div style="top:400px;height:2px;background:#feffd0"></div><div style="top:402px;height:1px;background:#feffd0"></div><div style="top:403px;height:1px;background:#feffd0"></div><div style="top:404px;height:2px;background:#faf0d7"></div><div style="top:406px;height:3px;background:#faf0d7"></div><div style="top:409px;height:3px;background:#daeeff"></div><div style="top:412px;height:3px;background:#e7e6ff"></div><div style="top:415px;height:3px;background:#faf0d7"></div><div style="top:418px;height:2px;background:#faf0d7"></div><div style="top:420px;height:1px;background:#faf0d7"></div><div style="top:421px;height:3px;background:#daeeff"></div><div style="top:424px;height:2px;background:#e7e6ff"></div><div style="top:426px;height:2px;background:#daeeff"></div><div style="top:428px;height:1px;background:#daeeff"></div><div style="top:429px;height:2px;background:#faf0d7"></div><div style="top:431px;height:2px;background:#daeeff"></div><div style="top:433px;height:2px;background:#feffd0"></div><div style="top:435px;height:2px;background:#faf0d7"></div><div style="top:437px;height:1px;background:#daeeff"></div><div style="top:438px;height:3px;background:#faf0d7"></div><div style="top:441px;height:2px;background:#faf0d7"></div><div style="top:443px;height:1px;background:#faf0d7"></div><div style="top:444px;height:1px;background:#faf0d7"></div><div style="top:445px;height:1px;background:#faf0d7"></div><div style="top:446px;height:2px;background:#daeeff"></div><div style="top:448px;height:2px;background:#faf0d7"></div><div style="top:450px;height:3px;background:#daeeff"></div><div style="top:453px;height:1px;background:#daeeff"></div><div style="top:454px;height:3px;background:#faf0d7"></div><div style="top:457px;height:3px;background:#feffd0"></div><div style="top:460px;height:2px;background:#feffd0"></div><div style="top:462px;height:1px;background:#feffd0"></div><div style="top:463px;height:3px;background:#daeeff"></div><div style="top:466px;height:1px;background:#daeeff"></div><div style="top:467px;height:2px;background:#e7e6ff"></div><div style="top:469px;height:3px;background:#feffd0"></div><div style="top:472px;height:1px;background:#feffd0"></div><div style="top:473px;height:1px;background:#e7e6ff"></div><div style="top:474px;height:3px;background:#feffd0"></div><div style="top:477px;height:1px;background:#feffd0"></div><div style="top:478px;height:1px;background:#e7e6ff"></div><div style="top:479px;height:3px;background:#feffd0"></div><div style="top:482px;height:3px;background:#e7e6ff"></div><div style="top:485px;height:1px;background:#faf0d7"></div><div style="top:486px;height:2px;background:#faf0d7"></div><div style="top:488px;height:2px;background:#feffd0"></div><div style="top:490px;height:2px;background:#faf0d7"></div><div style="top:492px;height:1px;background:#e7e6ff"></div><div style="top:493px;height:1px;background:#faf0d7"></div><div style="top:494px;height:1px;background:#faf0d7"></div><div style="top:495px;height:1px;background:#feffd0"></div><div style="top:496px;height:1px;background:#daeeff"></div><div style="top:497px;height:2px;background:#faf0d7"></div><div style="top:499px;height:2px;background:#e7e6ff"></div><div style="top:501px;height:2px;background:#feffd0"></div><div style="top:503px;height:1px;background:#faf0d7"></div><div style="top:504px;height:2px;background:#feffd0"></div><div style="top:506px;height:1px;background:#faf0d7"></div><div style="top:5px;height:2px;background:#a2a2a2"></div><div style="top:12px;height:1px;background:#a2a2a2"></div><div style="top:20px;height:1px;background:#ff00ff"></div><div style="top:24px;height:1px;background:#12272e"></div><div style="top:33px;height:1px;background:#ff00ff"></div><div style="top:34px;height:1px;background:#1c86ee"></div><div style="top:35px;height:1px;background:#12272e"></div><div style="top:57px;height:1px;background:#a40000"></div><div style="top:67px;height:1px;background:#a40000"></div><div style="top:173px;height:1px;background:#a2a2a2"></div><div style="top:175px;height:1px;background:#a2a2a2"></div><div style="top:205px;height:1px;background:#a2a2a2"></div><div style="top:206px;height:1px;background:#a2a2a2"></div><div style="top:212px;height:1px;background:#a2a2a2"></div><div style="top:224px;height:1px;background:#a2a2a2"></div><div style="top:288px;height:1px;background:#a2a2a2"></div><div style="top:294px;height:1px;background:#a2a2a2"></div><div style="top:354px;height:1px;background:#12272e"></div><div style="top:359px;height:1px;background:#a2a2a2"></div><div style="top:362px;height:1px;background:#a2a2a2"></div><div style="top:394px;height:1px;background:#a40000"></div></div>
<div id="vsb" class="abs">
 <div class="abs" style="left:6px;top:7px;width:0;height:0;border-left:4px solid transparent;border-right:4px solid transparent;border-bottom:4px solid #333"></div>
 <div class="abs" style="left:1px;top:41px;width:15px;height:16px;border:1px solid #9a9a9a;border-radius:2px;background:linear-gradient(90deg,#f7f7f7,#ececec 50%,#d6d6d6)"></div>
 <div class="abs" style="left:6px;top:495px;width:0;height:0;border-left:4px solid transparent;border-right:4px solid transparent;border-top:4px solid #333"></div>
</div>
<div id="hsb" class="abs">
 <div class="abs" style="left:6px;top:4px;width:0;height:0;border-top:4px solid transparent;border-bottom:4px solid transparent;border-right:4px solid #333"></div>
 <div class="abs" style="left:18px;top:1px;width:1218px;height:15px;border:1px solid #8f8f8f;border-radius:2px;background:linear-gradient(#f7f7f7 0%,#ebebeb 45%,#d9d9d9 55%,#c8c8c8 100%)"></div>
 <div class="abs" style="left:622px;top:5px;width:8px;height:6px;border-left:2px solid #777;border-right:2px solid #777"></div>
 <div class="abs" style="left:625px;top:5px;width:2px;height:6px;background:#777"></div>
 <div class="abs" style="left:1396px;top:4px;width:0;height:0;border-top:4px solid transparent;border-bottom:4px solid transparent;border-left:4px solid #333"></div>
</div>
<div id="corner" class="abs"></div>
<!-- menu -->
<div id="menu" class="abs"></div>
<div id="msepv" class="abs"></div>
<div class="mi" style="top:50px"><span class="ml">Capture File Properties</span><span class="ms">Ctrl+Alt+Shift+C</span></div>
<div class="mi" style="top:72px"><span class="ml">Resolved Addresses</span></div>
<div class="mi" style="top:94px"><span class="ml"><u>P</u>rotocol Hierarchy</span></div>
<div class="mi" style="top:116px"><span class="ml">Conversations</span></div>
<div class="mi" style="top:138px"><span class="ml">Endpoints</span></div>
<div class="mi" style="top:160px"><span class="ml">Packet Lengths</span></div>
<div class="mi hl" style="top:182px"><span class="ml"><u>I</u>/O Graph</span></div>
<div class="mi" style="top:204px"><span class="ml">Service Response Time</span><span class="ma"></span></div>
<div class="msep" style="top:231px"></div>
<div class="mi" style="top:235px"><span class="ml">DHCP (BOOTP) Statistics</span></div>
<div class="mi" style="top:257px"><span class="ml">ONC-RPC Programs</span></div>
<div class="mi" style="top:279px"><span class="ml">29West</span><span class="ma"></span></div>
<div class="mi" style="top:301px"><span class="ml">ANCP</span></div>
<div class="mi" style="top:323px"><span class="ml">BACnet</span><span class="ma"></span></div>
<div class="mi" style="top:345px"><span class="ml">Collectd</span></div>
<div class="mi" style="top:367px"><span class="ml">DNS</span></div>
<div class="mi" style="top:389px"><span class="ml">Flow Graph</span></div>
<div class="mi" style="top:411px"><span class="ml">HART-IP</span></div>
<div class="mi" style="top:433px"><span class="ml">HPFEEDS</span></div>
<div class="mi" style="top:455px"><span class="ml">HTTP</span><span class="ma"></span></div>
<div class="mi" style="top:477px"><span class="ml">HTTP2</span></div>
<div class="mi" style="top:499px"><span class="ml">Sametime</span></div>
<div class="mi" style="top:521px"><span class="ml">TCP Stream Graphs</span><span class="ma"></span></div>
<div class="mi" style="top:543px"><span class="ml">UDP Multicast Streams</span></div>
<div class="msep" style="top:570px"></div>
<div class="mi" style="top:574px"><span class="ml">IPv4 Statistics</span><span class="ma"></span></div>
<div class="mi" style="top:596px"><span class="ml">IPv6 Statistics</span><span class="ma"></span></div>
</body></html>
